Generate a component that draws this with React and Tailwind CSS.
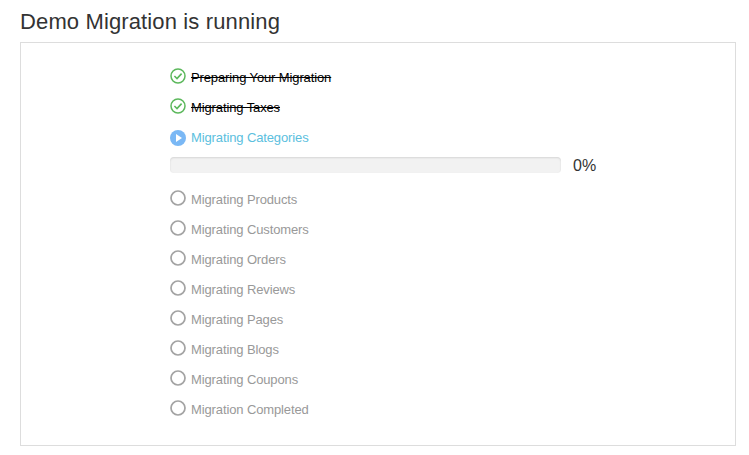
import React from 'react';

const steps = [
  { label: 'Preparing Your Migration', status: 'done' },
  { label: 'Migrating Taxes', status: 'done' },
  { label: 'Migrating Categories', status: 'active' },
  { label: 'Migrating Products' },
  { label: 'Migrating Customers' },
  { label: 'Migrating Orders' },
  { label: 'Migrating Reviews' },
  { label: 'Migrating Pages' },
  { label: 'Migrating Blogs' },
  { label: 'Migrating Coupons' },
  { label: 'Migration Completed' },
];

const StepIcon = ({ status }) => {
  if (status === 'done') {
    return (
      <svg width="16" height="16" viewBox="0 0 16 16" fill="none" className="mb-[2px] shrink-0">
        <circle cx="8" cy="8" r="7" stroke="#5cb85c" strokeWidth="1.5" />
        <path d="M4.4 8l2.6 2.6 4.6-5" stroke="#5cb85c" strokeWidth="1.6" />
      </svg>
    );
  }
  if (status === 'active') {
    return (
      <svg width="16" height="16" viewBox="0 0 16 16" className="mt-[2px] shrink-0">
        <circle cx="8" cy="8" r="8" fill="#7ab8f5" />
        <path d="M6 4v8l6-4z" fill="#fff" />
      </svg>
    );
  }
  return (
    <svg width="16" height="16" viewBox="0 0 16 16" fill="none" className="mb-[2px] shrink-0">
      <circle cx="8" cy="8" r="7" stroke="#a3a3a3" strokeWidth="1.7" />
    </svg>
  );
};

const Step = ({ label, status }) => {
  let textClass = 'text-[#999]';
  if (status === 'done') textClass = 'text-black line-through';
  if (status === 'active') textClass = 'text-[#5bc0de]';

  return (
    <div className="flex h-[30px] items-center gap-[5px]">
      <StepIcon status={status} />
      <span className={`mt-[2px] text-[13px] leading-[20px] tracking-[-0.12px] ${textClass}`}>{label}</span>
    </div>
  );
};

const App = () => {
  return (
    <div className="h-[455px] overflow-hidden bg-white pr-[13px] pl-[20px] font-['Liberation_Sans',Arial,sans-serif] text-[#333]">
      <h1 className="pt-[10px] text-[22px] leading-[24px] font-normal tracking-[0.13px]">Demo Migration is running</h1>
      <div className="mt-[8px] h-[404px] border border-[#ddd] pt-[19px] pl-[149px]">
        {steps.map((step) => (
          <React.Fragment key={step.label}>
            <Step label={step.label} status={step.status} />
            {step.status === 'active' && (
              <div className="flex h-[32px] items-start pt-[5px]">
                <div className="h-[16px] w-[391px] rounded-[4px] bg-[#f2f2f2] shadow-[inset_0_1px_2px_rgba(0,0,0,0.12)]" />
                <span className="mt-[1px] ml-[12px] text-[16px] leading-[16px]">0%</span>
              </div>
            )}
          </React.Fragment>
        ))}
      </div>
    </div>
  );
};

export default App;
